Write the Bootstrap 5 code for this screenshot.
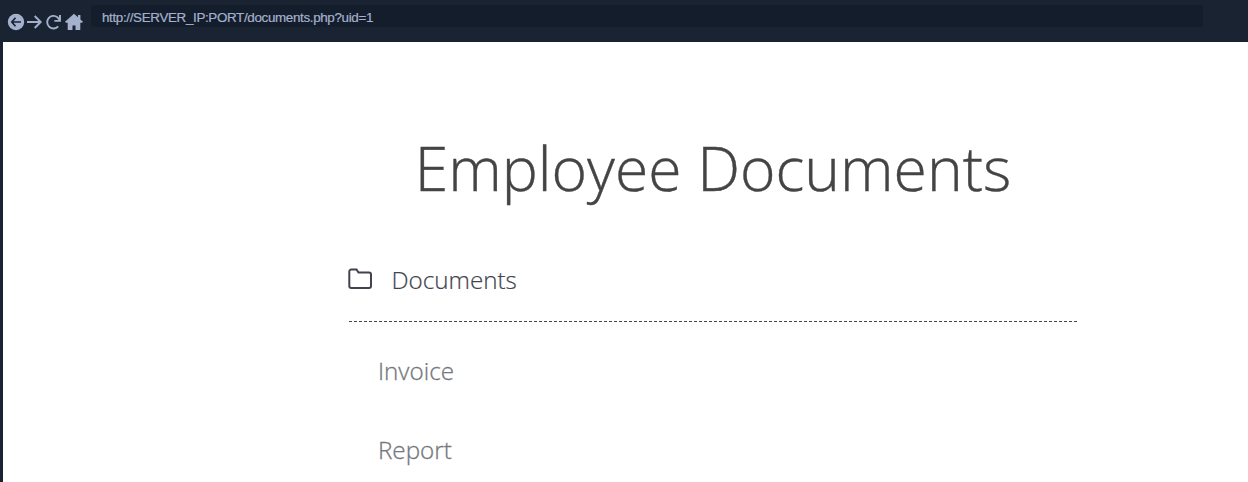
<!DOCTYPE html>
<html lang="en">
<head>
<meta charset="utf-8">
<meta name="viewport" content="width=device-width, initial-scale=1">
<title>Employee Documents</title>
<link href="https://cdn.jsdelivr.net/npm/bootstrap@5.3.0/dist/css/bootstrap.min.css" rel="stylesheet">
<style>
body{height:482px;overflow:hidden;background:#1a2332;font-family:"Open Sans",sans-serif}
.browser-bar{height:42px;background:#1a2332}
.tools{width:91px;height:42px}
.address{width:1112px;height:22px;margin-top:5px;border-radius:3px;background:#141d2b;color:#a4b1cd;font:13.4px/25px "Liberation Sans",sans-serif;letter-spacing:-.34px;padding-left:11px;-webkit-text-stroke:.2px}
.page{height:440px;margin-left:3px;background:#fff;font-weight:300}
.content{width:728px;margin-left:346px}
h1{font-size:60.6px;line-height:80px;font-weight:300;color:#444;padding-top:86px;margin:0;-webkit-text-stroke:.4px #444}
.folder-row{height:83px;margin-top:31px;color:#41434d;font-size:24.2px;border-bottom:1px dashed #444;-webkit-text-stroke:.2px}
.folder-row svg{margin:-2px 0 0 -1px}
.folder-row span{margin-left:17.5px}
.doc{font-size:24.2px;line-height:36px;color:#74777d;margin-bottom:43px;padding-left:29px;-webkit-text-stroke:.3px}
.doc-list{padding-top:31px}
</style>
</head>
<body>
<header class="browser-bar d-flex">
<svg class="tools flex-shrink-0" viewBox="0 0 91 42" aria-hidden="true"><circle cx="16" cy="22" r="8.2" fill="#a4b1cd"/><path d="M21 22h-9M15.5 17.8L11.8 22l3.7 4.2" fill="none" stroke="#1a2332" stroke-width="1.7"/><path d="M27 22h13M34.7 16l6 6-6 6" fill="none" stroke="#a4b1cd" stroke-width="1.9"/><path d="M58.2 26.4A6.3 6.3 0 1 1 57.4 17.2L60 20.5M60 15v5.9h-5.6" fill="none" stroke="#a4b1cd" stroke-width="1.9"/><path d="M74 13.7l4 3.6V15h2.4v4.4l2.6 2.3-1 1.1h-1.7V30h-4.8v-4.5h-3V30h-4.8v-7.2H66l-1-1.1z" fill="#a4b1cd"/></svg>
<div class="address flex-shrink-0">http://SERVER_IP:PORT/documents.php?uid=1</div>
</header>
<main class="page overflow-hidden">
<div class="content">
<h1 class="text-center text-nowrap">Employee Documents</h1>
<div class="folder-row d-flex align-items-center"><svg width="26" height="24" viewBox="0 0 26 24" fill="none" stroke="#41434d" stroke-width="2"><path d="M23 19a2 2 0 0 1-2 2H3.3a2 2 0 0 1-2-2V4.5a2 2 0 0 1 2-2h5.2l2 3H21a2 2 0 0 1 2 2z"/></svg><span>Documents</span></div>
<div class="doc-list">
<div class="doc">Invoice</div>
<div class="doc">Report</div>
</div>
</div>
</main>
<script src="https://cdn.jsdelivr.net/npm/bootstrap@5.3.0/dist/js/bootstrap.bundle.min.js"></script>
</body>
</html>
